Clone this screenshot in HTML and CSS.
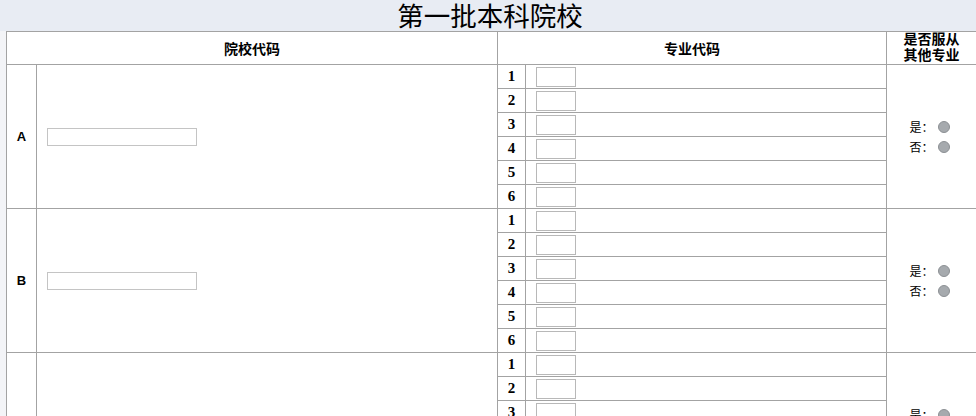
FILE: index.html
```html
<!DOCTYPE html>
<html lang="zh">
<head>
<meta charset="utf-8">
<title>第一批本科院校</title>
<link rel="stylesheet" href="styles.css">
</head>
<body>
<div class="title">第一批本科院校</div>
<div class="wrap">
<table class="form">
<colgroup>
<col class="c-letter"><col class="c-school"><col class="c-num"><col class="c-major"><col class="c-obey">
</colgroup>
<thead>
<tr class="head">
<th colspan="2">院校代码</th>
<th colspan="2">专业代码</th>
<th class="obey-h"><span class="obey-t">是否服从<br>其他专业</span></th>
</tr>
</thead>
<tbody>
<tr>
<td rowspan="6" class="letter">A</td>
<td rowspan="6" class="school"><input class="school-in" type="text"></td>
<td class="num">1</td><td class="major"><input class="major-in" type="text"></td>
<td rowspan="6" class="obey"><div class="opt">是：<input type="radio" name="oa"></div><div class="opt">否：<input type="radio" name="oa"></div></td>
</tr>
<tr><td class="num">2</td><td class="major"><input class="major-in" type="text"></td></tr>
<tr><td class="num">3</td><td class="major"><input class="major-in" type="text"></td></tr>
<tr><td class="num">4</td><td class="major"><input class="major-in" type="text"></td></tr>
<tr><td class="num">5</td><td class="major"><input class="major-in" type="text"></td></tr>
<tr><td class="num">6</td><td class="major"><input class="major-in" type="text"></td></tr>
<tr>
<td rowspan="6" class="letter">B</td>
<td rowspan="6" class="school"><input class="school-in" type="text"></td>
<td class="num">1</td><td class="major"><input class="major-in" type="text"></td>
<td rowspan="6" class="obey"><div class="opt">是：<input type="radio" name="ob"></div><div class="opt">否：<input type="radio" name="ob"></div></td>
</tr>
<tr><td class="num">2</td><td class="major"><input class="major-in" type="text"></td></tr>
<tr><td class="num">3</td><td class="major"><input class="major-in" type="text"></td></tr>
<tr><td class="num">4</td><td class="major"><input class="major-in" type="text"></td></tr>
<tr><td class="num">5</td><td class="major"><input class="major-in" type="text"></td></tr>
<tr><td class="num">6</td><td class="major"><input class="major-in" type="text"></td></tr>
<tr>
<td rowspan="6" class="letter">C</td>
<td rowspan="6" class="school"><input class="school-in" type="text"></td>
<td class="num">1</td><td class="major"><input class="major-in" type="text"></td>
<td rowspan="6" class="obey"><div class="opt">是：<input type="radio" name="oc"></div><div class="opt">否：<input type="radio" name="oc"></div></td>
</tr>
<tr><td class="num">2</td><td class="major"><input class="major-in" type="text"></td></tr>
<tr><td class="num">3</td><td class="major"><input class="major-in" type="text"></td></tr>
<tr><td class="num">4</td><td class="major"><input class="major-in" type="text"></td></tr>
<tr><td class="num">5</td><td class="major"><input class="major-in" type="text"></td></tr>
<tr><td class="num">6</td><td class="major"><input class="major-in" type="text"></td></tr>
</tbody>
</table>
</div>
</body>
</html>
```
FILE: styles.css
```css
html, body {
  margin: 0;
  padding: 0;
  background: #f3f4f7;
  overflow: hidden;
}
body {
  width: 976px;
  font-family: "Noto Sans CJK SC", "Liberation Sans", sans-serif;
  color: #000;
}
.title {
  height: 31px;
  line-height: 30px;
  background: #e8ecf3;
  text-align: center;
  font-size: 26.5px;
  font-family: "Noto Sans CJK SC", serif;
  font-weight: 400;
  padding-left: 4px;
}
.wrap {
  padding-left: 6px;
  width: 1000px;
}
.form {
  width: 972px;
  table-layout: fixed;
  border-collapse: collapse;
  background: #fff;
}
.c-letter { width: 30px; }
.c-school { width: 461px; }
.c-num { width: 28px; }
.c-major { width: 361px; }
.c-obey { width: 92px; }
.form th, .form td {
  border: 1px solid #a3a3a3;
  padding: 0;
}
.head { height: 33px; }
.head th {
  font-size: 14px;
  font-weight: 700;
  line-height: 16px;
  text-align: center;
  vertical-align: middle;
}
.head th.obey-h {
  padding-right: 2px;
}
.obey-t {
  display: block;
  margin-top: -4px;
  line-height: 16px;
}
.form tbody tr { height: 24px; }
.letter {
  font-family: "Liberation Sans", sans-serif;
  font-weight: 700;
  font-size: 13px;
  text-align: center;
  vertical-align: middle;
}
.school {
  vertical-align: middle;
  padding-left: 10px !important;
}
.school-in {
  display: block;
  box-sizing: border-box;
  width: 150px;
  height: 18px;
  margin: 0;
  border: 1px solid #c4c4c4;
  padding: 0 2px;
  background: #fff;
  outline: none;
}
.num {
  font-family: "Liberation Serif", serif;
  font-weight: 700;
  font-size: 15px;
  text-align: center;
  vertical-align: middle;
}
.major {
  vertical-align: middle;
  padding-left: 10px !important;
}
.major-in {
  display: block;
  box-sizing: border-box;
  width: 40px;
  height: 20px;
  margin: 0;
  border: 1px solid #b8b8b8;
  background: #fff;
  outline: none;
}
.obey {
  text-align: center;
  vertical-align: middle;
}
.opt {
  display: flex;
  align-items: center;
  justify-content: center;
  gap: 4px;
  font-size: 12px;
  height: 20px;
  padding-right: 6px;
}
.opt input {
  appearance: none;
  -webkit-appearance: none;
  width: 12px;
  height: 12px;
  margin: 0;
  border-radius: 50%;
  border: 1px solid #8c9094;
  background: #a6aaae;
  box-sizing: border-box;
}
```
